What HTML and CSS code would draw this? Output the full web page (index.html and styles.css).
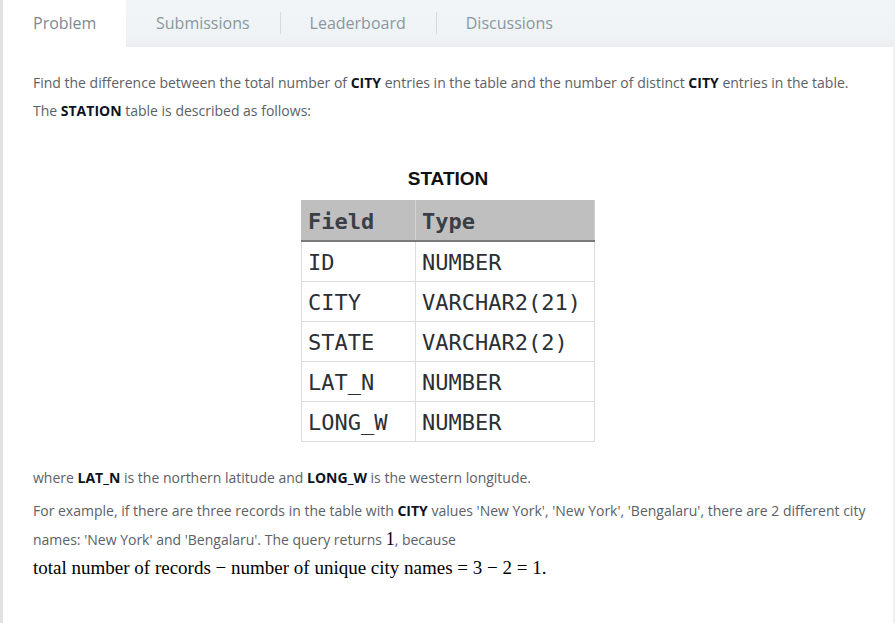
FILE: index.html
```html
<!DOCTYPE html>
<html>
<head>
<meta charset="utf-8">
<link rel="stylesheet" href="styles.css">
</head>
<body>
<div class="page">
  <div class="tabs">
    <div class="tab active">Problem</div>
    <div class="tab">Submissions</div>
    <div class="tab sep">Leaderboard</div>
    <div class="tab sep">Discussions</div>
  </div>
  <div class="content">
    <p class="line">Find the difference between the total number of <b>CITY</b> entries in the table and the number of distinct <b>CITY</b> entries in the table.</p>
    <p class="line">The <b>STATION</b> table is described as follows:</p>
    <div class="figure">
      <div class="caption">STATION</div>
      <table class="station">
        <thead>
          <tr><th>Field</th><th>Type</th></tr>
        </thead>
        <tbody>
          <tr><td>ID</td><td>NUMBER</td></tr>
          <tr><td>CITY</td><td>VARCHAR2(21)</td></tr>
          <tr><td>STATE</td><td>VARCHAR2(2)</td></tr>
          <tr><td>LAT_N</td><td>NUMBER</td></tr>
          <tr><td>LONG_W</td><td>NUMBER</td></tr>
        </tbody>
      </table>
    </div>
    <p class="line">where <b>LAT_N</b> is the northern latitude and <b>LONG_W</b> is the western longitude.</p>
    <p class="line gap">For example, if there are three records in the table with <b>CITY</b> values 'New York', 'New York', 'Bengalaru', there are 2 different city names: 'New York' and 'Bengalaru'. The query returns <span class="mnum">1</span>, because</p>
    <p class="math">total number of records − number of unique city names = 3 − 2 = 1.</p>
  </div>
</div>
</body>
</html>
```
FILE: styles.css
```css
html, body {
  margin: 0;
  padding: 0;
  background: #ffffff;
}
.page {
  min-height: 623px;
  border-left: 3px solid #e2e2e2;
  border-right: 2px solid #f0f0f0;
  box-sizing: border-box;
  font-family: "Open Sans", "Liberation Sans", sans-serif;
}
.tabs {
  display: flex;
  align-items: center;
  height: 47px;
  background: linear-gradient(to bottom, #f2f5f7 0%, #eff3f5 80%, #e9edef 100%);
}
.tab {
  height: 47px;
  line-height: 47px;
  padding: 0 30px;
  font-size: 16px;
  color: #8a979e;
  position: relative;
}
.tab.active {
  background: #ffffff;
  color: #7b8a92;
  width: 63px;
}
.tab.sep::before {
  content: "";
  position: absolute;
  left: 0;
  top: 12px;
  height: 22px;
  border-left: 1px solid #d3d9dc;
}
.content {
  padding: 22px 12px 40px 30px;
}
.line {
  margin: 0;
  font-size: 14px;
  line-height: 28px;
  color: #5b6166;
}
.line.gap {
  margin-top: 5px;
}
.line b {
  color: #0e141e;
  font-weight: 700;
}
.mnum {
  font-family: "Liberation Serif", "DejaVu Serif", serif;
  font-size: 18px;
  color: #000;
}
.figure {
  display: flex;
  flex-direction: column;
  align-items: center;
  padding: 43px 18px 22px 0;
}
.caption {
  font-family: "Liberation Sans", Arial, sans-serif;
  font-weight: 700;
  font-size: 19px;
  color: #111;
  line-height: 22px;
  margin-bottom: 10px;
}
.station {
  border-collapse: collapse;
  font-family: "DejaVu Sans Mono", monospace;
  font-size: 22px;
  line-height: normal;
  color: #2b2f36;
}
.station th, .station td {
  text-align: left;
  padding: 2px 6px 0 6px;
  height: 37px;
  border: 1px solid #dcdcdc;
}
.station th {
  background: #bfbfbf;
  color: #3a3e45;
  font-weight: 700;
  border-color: #bfbfbf;
  border-bottom: 2px solid #7a7a7a;
  border-right: 1px solid #d2d2d2;
}
.station th:first-child, .station td:first-child {
  width: 101px;
}
.station th:last-child, .station td:last-child {
  width: 166px;
}
.math {
  margin: 0;
  font-family: "Liberation Serif", "DejaVu Serif", serif;
  font-size: 19px;
  line-height: 28px;
  color: #000;
}
```
